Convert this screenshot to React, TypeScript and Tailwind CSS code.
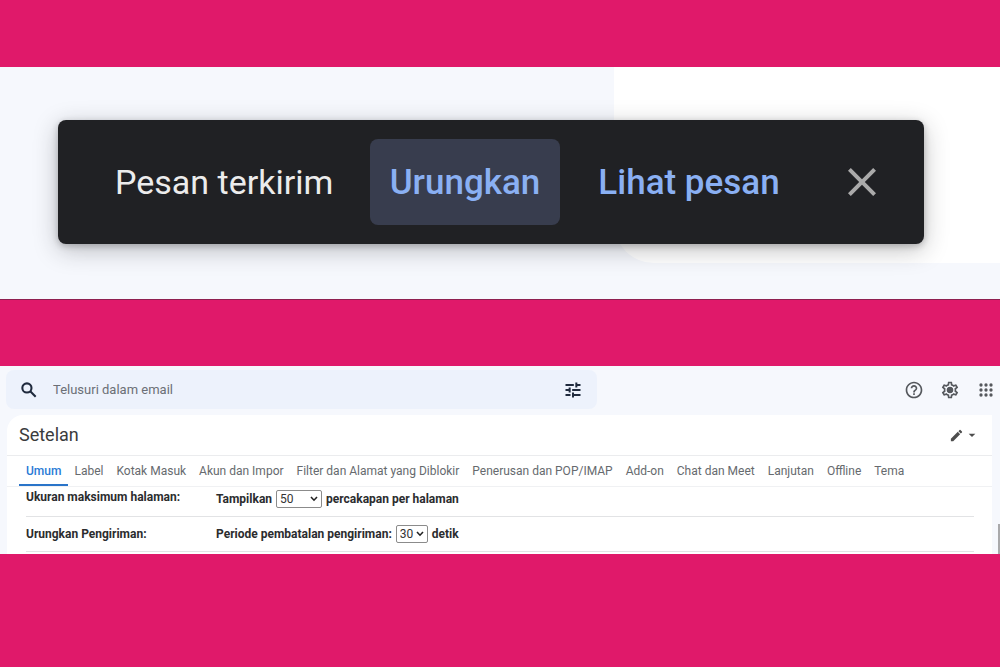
import { ReactNode } from "react";
import {
  MdArrowDropDown,
  MdClose,
  MdEdit,
  MdHelpOutline,
  MdOutlineSettings,
} from "react-icons/md";

const tabs = [
  "Umum",
  "Label",
  "Kotak Masuk",
  "Akun dan Impor",
  "Filter dan Alamat yang Diblokir",
  "Penerusan dan POP/IMAP",
  "Add-on",
  "Chat dan Meet",
  "Lanjutan",
  "Offline",
  "Tema",
];

const Toast = () => {
  return (
    <section className="relative border-b border-[#8f1f50] bg-[#f6f8fd] pt-[53px] pr-[76px] pb-[55px] pl-[58px]">
      <div className="absolute top-0 right-0 bottom-9 left-[61.4%] rounded-bl-[40px] bg-white" />
      <div
        role="status"
        className="relative flex h-[124px] items-center rounded-lg bg-[#202124] pr-[38px] pl-[57px] text-[35px] leading-10 shadow-[0_6px_24px_rgba(32,33,36,0.28),0_2px_6px_rgba(32,33,36,0.25)]"
      >
        <span className="flex-1 text-[34px] whitespace-nowrap text-[#ececec]">
          Pesan terkirim
        </span>
        <button className="h-[86px] w-[190px] rounded-lg bg-[#383d4e] pt-0.5 font-medium text-[#8ab0f3]">
          Urungkan
        </button>
        <button className="ml-5 h-[86px] w-[218px] rounded-lg pt-0.5 font-medium text-[#8ab0f3]">
          Lihat pesan
        </button>
        <button aria-label="Tutup" className="ml-10 text-[#aaaaaa]">
          <MdClose size={48} />
        </button>
      </div>
    </section>
  );
};

const SearchIcon = () => {
  return (
    <svg
      viewBox="0 0 24 24"
      className="size-5"
      fill="none"
      stroke="currentColor"
      strokeWidth="2.5"
    >
      <circle cx="9.5" cy="9.5" r="5.5" />
      <path d="M13.5 13.5l6.5 6.5" />
    </svg>
  );
};

const TuneIcon = () => {
  return (
    <svg
      viewBox="0 0 24 24"
      className="size-5"
      fill="none"
      stroke="currentColor"
      strokeWidth="2.4"
    >
      <path d="M3 6h10M17 6h4M16 3v6" />
      <path d="M3 12h4M11 12h10M8 9v6" />
      <path d="M3 18h6M13 18h8M12 15v6" />
    </svg>
  );
};

const AppsIcon = () => {
  return (
    <svg viewBox="0 0 24 24" className="size-5" fill="currentColor">
      {[6, 12, 18].map((y) =>
        [6, 12, 18].map((x) => (
          <circle key={`${x}-${y}`} cx={x} cy={y} r="2" />
        ))
      )}
    </svg>
  );
};

const GearIcon = () => {
  return (
    <span className="grid place-items-center">
      <MdOutlineSettings size={20} className="col-start-1 row-start-1" />
      <span className="col-start-1 row-start-1 size-1.5 rounded-full bg-current" />
    </span>
  );
};

const SearchBar = () => {
  return (
    <div className="flex h-[49px] items-start justify-between pt-1 pr-1 pl-1.5">
      <form className="flex h-[39px] w-[59.7%] items-center rounded-lg bg-[#edf2fc] pr-3.5 pl-[13px] text-[#1f2a3d]">
        <button type="button" aria-label="Telusuri">
          <SearchIcon />
        </button>
        <input
          type="text"
          aria-label="Telusuri dalam email"
          placeholder="Telusuri dalam email"
          className="ml-3.5 min-w-0 flex-1 text-[13px] outline-none placeholder:text-[#6b6f76]"
        />
        <button type="button" aria-label="Opsi penelusuran">
          <TuneIcon />
        </button>
      </form>
      <div className="flex h-[39px] items-center gap-4 text-[#55585d]">
        <button aria-label="Bantuan">
          <MdHelpOutline size={20} />
        </button>
        <button aria-label="Setelan">
          <GearIcon />
        </button>
        <button aria-label="Aplikasi Google">
          <AppsIcon />
        </button>
      </div>
    </div>
  );
};

type RowProps = {
  title: string;
  children: ReactNode;
};

const Row = ({ title, children }: RowProps) => {
  return (
    <div className="mr-[18px] ml-[19px] flex border-b border-[#e2e3e5] text-xs leading-5 font-bold text-[#2b2c2e]">
      <div className="w-[190px] shrink-0">{title}</div>
      <div className="flex items-center gap-1">{children}</div>
    </div>
  );
};

type SelectProps = {
  id: string;
  width: string;
  options: string[];
  value: string;
};

const Select = ({ id, width, options, value }: SelectProps) => {
  return (
    <span className={`relative ${width}`}>
      <select
        id={id}
        defaultValue={value}
        className="block h-[18px] w-full appearance-none rounded-xs border border-[#8b8b8b] bg-white pl-[3px] text-xs leading-4 font-normal text-[#333333]"
      >
        {options.map((option) => (
          <option key={option}>{option}</option>
        ))}
      </select>
      <svg
        viewBox="0 0 8 6"
        className="pointer-events-none absolute top-1.5 right-1 h-1.5 w-2"
        fill="none"
        stroke="#222222"
        strokeWidth="1.6"
      >
        <path d="M1 1l3 3.2L7 1" />
      </svg>
    </span>
  );
};

const Settings = () => {
  return (
    <section className="relative h-[188px] overflow-hidden bg-[#f6f8fd]">
      <SearchBar />
      <div className="mr-2 ml-[7px] h-full rounded-tl-2xl bg-white">
        <header className="flex h-[41px] items-center justify-between border-b border-[#ebecee] pr-3 pl-3">
          <h1 className="text-lg text-[#3a3b3d]">Setelan</h1>
          <button
            aria-label="Metode masukan"
            className="flex items-center text-[#4d4d4d]"
          >
            <MdEdit size={15} />
            <MdArrowDropDown size={16} />
          </button>
        </header>
        <nav className="flex h-[31px] border-b border-[#f0f1f3] pl-3 text-xs whitespace-nowrap text-[#666a6e]">
          {tabs.map((tab, i) => (
            <a
              key={tab}
              href="#"
              className={
                i === 0
                  ? "mr-1.5 flex items-center border-b-2 border-[#2a74c9] px-[7px] pt-0.5 font-medium text-[#2a7bd6]"
                  : "mr-[13px] flex items-center"
              }
            >
              {tab}
            </a>
          ))}
        </nav>
        <Row title="Ukuran maksimum halaman:">
          <div className="flex items-center gap-1 pt-0.5 pb-[7px]">
            <label htmlFor="page-size">Tampilkan</label>
            <Select
              id="page-size"
              width="w-[46px]"
              value="50"
              options={["10", "25", "50", "100"]}
            />
            <span>percakapan per halaman</span>
          </div>
        </Row>
        <div className="pt-[7px]">
          <Row title="Urungkan Pengiriman:">
            <div className="flex items-center gap-1 pb-[7px]">
              <label htmlFor="undo-period">Periode pembatalan pengiriman:</label>
              <Select
                id="undo-period"
                width="w-8"
                value="30"
                options={["5", "10", "20", "30"]}
              />
              <span>detik</span>
            </div>
          </Row>
        </div>
      </div>
      <div className="absolute right-0 bottom-0 h-[30px] w-0.5 bg-[#a9a9ab]" />
    </section>
  );
};

export default function App() {
  return (
    <main className="flex min-h-screen flex-col gap-[66px] bg-[#e0196a] pt-[67px] font-['Roboto','Liberation_Sans',sans-serif]">
      <Toast />
      <Settings />
    </main>
  );
}
